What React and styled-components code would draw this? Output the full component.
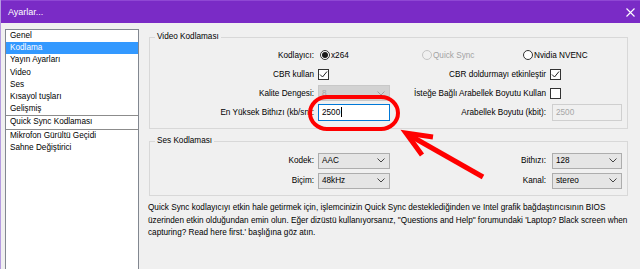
import React from "react";
import styled, { createGlobalStyle } from "styled-components";

const GlobalStyle = createGlobalStyle`
  html, body { margin: 0; padding: 0; background: #f0f0f0; }
  body { font-family: "Liberation Sans", Arial, sans-serif; font-size: 8.2px; color: #000; }
`;

const Window = styled.div`
  position: relative;
  width: 640px;
  height: 269px;
  overflow: hidden;
  background: #f0f0f0;
  box-sizing: border-box;
  border-left: 1px solid #b59be0;
  display: flex;
  flex-direction: column;
`;

const TitleBar = styled.div`
  height: 23px;
  flex: none;
  background: #7a2bc6;
  border-top: 1px solid #8f47d4;
  box-sizing: border-box;
  display: flex;
  align-items: center;
  justify-content: space-between;
  padding: 0 5px 0 7px;
  color: #fff;
  font-size: 9px;
`;

const Body = styled.div`
  flex: 1;
  display: flex;
  padding: 6px 0 0 4px;
`;

const Sidebar = styled.ul`
  list-style: none;
  margin: 0;
  padding: 0;
  width: 134px;
  box-sizing: border-box;
  height: 260px;
  background: #fff;
  border: 1px solid #828790;
  border-bottom: none;
`;

const Item = styled.li`
  height: 12.2px;
  line-height: 12.2px;
  padding-left: 4px;
  white-space: nowrap;
  background: ${({ $active }) => ($active ? "#3399ff" : "transparent")};
  color: ${({ $active }) => ($active ? "#fff" : "#000")};
  border-bottom: ${({ $sep }) => ($sep ? "1px solid #8c8c8c" : "none")};
`;

const Main = styled.div`
  width: 479px;
  margin-left: 10px;
  display: flex;
  flex-direction: column;
`;

const Group = styled.fieldset`
  margin: ${({ $top }) => $top}px 0 0 0;
  padding: ${({ $pad }) => $pad};
  border: 1px solid #d8d8d8;
  min-width: 0;
`;

const Legend = styled.legend`
  margin-left: 5px;
  padding: 0 2px;
  line-height: 10px;
`;

const Grid = styled.div`
  display: grid;
  grid-template-columns: 168px 72px 160px 72px;
  grid-auto-rows: ${({ $row }) => $row}px;
  row-gap: 1px;
  align-items: center;
`;

const Label = styled.div`
  text-align: right;
  padding-right: 4px;
  white-space: nowrap;
`;

const Options = styled.div`
  grid-column: 2 / -1;
  display: grid;
  grid-template-columns: 102px 101px auto;
  align-items: center;
`;

const Option = styled.label`
  display: flex;
  align-items: center;
  gap: 1px;
  color: ${({ $disabled }) => ($disabled ? "#a3a3a3" : "#000")};
  white-space: nowrap;
`;

const Radio = styled.span`
  width: 10px;
  height: 10px;
  box-sizing: border-box;
  border-radius: 50%;
  margin-left: 2px;
  border: 1px solid ${({ $disabled }) => ($disabled ? "#c4c4c4" : "#333")};
  background: ${({ $disabled }) => ($disabled ? "#f0f0f0" : "#fff")};
  display: flex;
  align-items: center;
  justify-content: center;
  &::after {
    content: "";
    width: 6px;
    height: 6px;
    border-radius: 50%;
    background: ${({ $checked }) => ($checked ? "#1a1a1a" : "transparent")};
  }
`;

const Box = styled.span`
  width: 11px;
  height: 11px;
  box-sizing: border-box;
  border: 1px solid #333;
  background: #fff;
  display: flex;
  align-items: center;
  justify-content: center;
`;

const Select = styled.div`
  height: 16px;
  box-sizing: border-box;
  margin-left: ${({ $shift }) => $shift || 0}px;
  border: 1px solid ${({ $disabled }) => ($disabled ? "#c8c8c8" : "#adadad")};
  background: ${({ $disabled }) => ($disabled ? "#d2d2d2" : "#e5e5e5")};
  color: ${({ $disabled }) => ($disabled ? "#a6a6a6" : "#000")};
  display: flex;
  align-items: center;
  justify-content: space-between;
  padding: 0 4px 0 3px;
`;

const Input = styled.div`
  height: 17px;
  box-sizing: border-box;
  margin-left: ${({ $shift }) => $shift || 0}px;
  border: 1px solid ${({ $focus }) => ($focus ? "#0078d7" : "#cfcfcf")};
  background: ${({ $focus }) => ($focus ? "#fff" : "#f0f0f0")};
  color: ${({ $focus }) => ($focus ? "#000" : "#a6a6a6")};
  display: flex;
  align-items: center;
  padding-left: 3px;
`;

const Caret = styled.span`
  width: 1px;
  height: 10px;
  background: #000;
  margin-left: 1px;
`;

const Note = styled.p`
  margin: 6px 0 0 -1px;
  line-height: 12.5px;
  white-space: nowrap;
`;

const Overlay = styled.svg`
  position: absolute;
  left: -1px;
  top: 0;
  pointer-events: none;
`;

const Chevron = ({ color = "#444" }) => (
  <svg width="8" height="5" viewBox="0 0 8 5">
    <polyline points="0.5,0.5 4,4 7.5,0.5" fill="none" stroke={color} strokeWidth="1" />
  </svg>
);

const Check = () => (
  <svg width="9" height="9" viewBox="0 0 9 9">
    <polyline points="1,4.5 3.5,7 8,1.5" fill="none" stroke="#222" strokeWidth="1" />
  </svg>
);

const menu = [
  { t: "Genel" },
  { t: "Kodlama", active: true },
  { t: "Yayın Ayarları" },
  { t: "Video" },
  { t: "Ses" },
  { t: "Kısayol tuşları" },
  { t: "Gelişmiş", sep: true },
  { t: "Quick Sync Kodlaması", sep: true },
  { t: "Mikrofon Gürültü Geçidi" },
  { t: "Sahne Değiştirici" },
];

export default function App() {
  return (
    <>
      <GlobalStyle />
      <Window>
        <TitleBar>
          <span>Ayarlar...</span>
          <svg width="9" height="9" viewBox="0 0 9 9">
            <path d="M0.5 0.5 L8.5 8.5 M8.5 0.5 L0.5 8.5" stroke="#fff" strokeWidth="1.1" />
          </svg>
        </TitleBar>
        <Body>
          <Sidebar>
            {menu.map((m) => (
              <Item key={m.t} $active={m.active} $sep={m.sep}>
                {m.t}
              </Item>
            ))}
          </Sidebar>
          <Main>
            <Group $top={3} $pad="4px 0 7px 0">
              <Legend>Video Kodlaması</Legend>
              <Grid $row={18}>
                <Label>Kodlayıcı:</Label>
                <Options>
                  <Option>
                    <Radio $checked />x264
                  </Option>
                  <Option $disabled>
                    <Radio $disabled />Quick Sync
                  </Option>
                  <Option>
                    <Radio />Nvidia NVENC
                  </Option>
                </Options>

                <Label>CBR kullan</Label>
                <Box>
                  <Check />
                </Box>
                <Label>CBR doldurmayı etkinleştir</Label>
                <Box>
                  <Check />
                </Box>

                <Label>Kalite Dengesi:</Label>
                <Select $disabled>
                  <span>8</span>
                  <Chevron color="#a0a0a0" />
                </Select>
                <Label>İsteğe Bağlı Arabellek Boyutu Kullan</Label>
                <Box />

                <Label>En Yüksek Bithızı (kb/sn):</Label>
                <Input $focus>
                  2500
                  <Caret />
                </Input>
                <Label>Arabellek Boyutu (kbit):</Label>
                <Input $shift={2}>2500</Input>
              </Grid>
            </Group>

            <Group $top={7} $pad="5px 0 5px 0">
              <Legend>Ses Kodlaması</Legend>
              <Grid $row={19}>
                <Label>Kodek:</Label>
                <Select>
                  <span>AAC</span>
                  <Chevron />
                </Select>
                <Label>Bithızı:</Label>
                <Select $shift={2}>
                  <span>128</span>
                  <Chevron />
                </Select>

                <Label>Biçim:</Label>
                <Select>
                  <span>48kHz</span>
                  <Chevron />
                </Select>
                <Label>Kanal:</Label>
                <Select $shift={2}>
                  <span>stereo</span>
                  <Chevron />
                </Select>
              </Grid>
            </Group>

            <Note>
              Quick Sync kodlayıcıyı etkin hale getirmek için, işlemcinizin Quick Sync desteklediğinden ve Intel grafik bağdaştırıcısının BIOS
              <br />
              üzerinden etkin olduğundan emin olun. Eğer dizüstü kullanıyorsanız, "Questions and Help" forumundaki  'Laptop? Black screen when
              <br />
              capturing? Read here first.' başlığına göz atın.
            </Note>
          </Main>
        </Body>
        <Overlay width="640" height="269" viewBox="0 0 640 269">
          <rect x="310" y="97" width="88" height="32" rx="17" ry="16" fill="none" stroke="#ff0000" strokeWidth="4" />
          <line x1="483" y1="177" x2="409" y2="135" stroke="#ff0000" strokeWidth="5" />
          <polyline points="433,137 406,133 422,155" fill="none" stroke="#ff0000" strokeWidth="5" strokeLinejoin="miter" />
        </Overlay>
      </Window>
    </>
  );
}
